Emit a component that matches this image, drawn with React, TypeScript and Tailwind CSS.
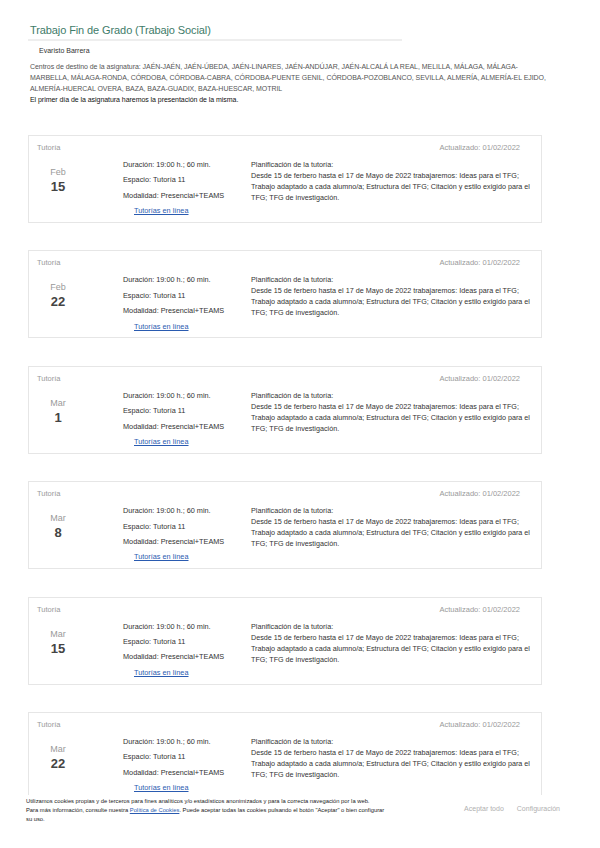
const tutorias = [
  { mes: "Feb", dia: "15" },
  { mes: "Feb", dia: "22" },
  { mes: "Mar", dia: "1" },
  { mes: "Mar", dia: "8" },
  { mes: "Mar", dia: "15" },
  { mes: "Mar", dia: "22" },
];

const TutoriaCard = ({ mes, dia }: { mes: string; dia: string }) => {
  return (
    <div className="h-[88px] border border-[#e6e6e6] bg-white pl-[8px] pr-[21px] pt-[6px] flex flex-col">
      <div className="flex justify-between text-[7.5px] leading-[11px] text-[#9a9a9a]">
        <span>Tutoría</span>
        <span>Actualizado: 01/02/2022</span>
      </div>
      <div className="flex mt-[4px]">
        <div className="w-[86px] shrink-0 flex flex-col items-center pr-[44px] pt-[9px]">
          <span className="text-[9px] leading-[12px] text-[#9a9a9a]">{mes}</span>
          <span className="text-[13px] leading-[18px] font-bold text-[#444]">{dia}</span>
        </div>
        <div className="w-[128px] shrink-0 text-[7.3px] leading-[15.4px] text-[#333] whitespace-nowrap">
          <div>Duración: 19:00 h.; 60 min.</div>
          <div>Espacio: Tutoría 11</div>
          <div>Modalidad: Presencial+TEAMS</div>
          <a href="#" className="block pl-[11px] text-[#2a5bb0] underline">
            Tutorías en línea
          </a>
        </div>
        <div className="flex-1 pt-[2px] text-[7.2px] leading-[11px] text-[#333] whitespace-nowrap">
          <div>Planificación de la tutoría:</div>
          <div>Desde 15 de ferbero hasta el 17 de Mayo de 2022 trabajaremos: Ideas para el TFG;</div>
          <div>Trabajo adaptado a cada alumno/a; Estructura del TFG; Citación y estilo exigido para el</div>
          <div>TFG; TFG de investigación.</div>
        </div>
      </div>
    </div>
  );
};

const App = () => {
  return (
    <div className="min-h-[848px] bg-white font-['Liberation_Sans',Arial,sans-serif] pl-[28px] pr-[58px] pt-[22px] pb-[80px]">
      <h1 className="w-[374px] border-b-2 border-[#eeeeee] pl-[2px] pb-[1px] text-[11px] leading-[16px] tracking-[-0.1px] text-[#3e7b69]">
        Trabajo Fin de Grado (Trabajo Social)
      </h1>
      <p className="pl-[11px] mt-[5px] text-[7px] leading-[10px] text-[#333]">Evaristo Barrera</p>
      <div className="pl-[2px] mt-[5px] text-[7px] leading-[11px] tracking-[-0.05px] whitespace-nowrap">
        <div className="text-[#555]">
          Centros de destino de la asignatura: JAÉN-JAÉN, JAÉN-ÚBEDA, JAÉN-LINARES, JAÉN-ANDÚJAR, JAÉN-ALCALÁ LA REAL, MELILLA, MÁLAGA, MÁLAGA-
          <br />
          MARBELLA, MÁLAGA-RONDA, CÓRDOBA, CÓRDOBA-CABRA, CÓRDOBA-PUENTE GENIL, CÓRDOBA-POZOBLANCO, SEVILLA, ALMERÍA, ALMERÍA-EL EJIDO,
          <br />
          ALMERÍA-HUERCAL OVERA, BAZA, BAZA-GUADIX, BAZA-HUESCAR, MOTRIL
        </div>
        <div className="text-[#111]">El primer día de la asignatura haremos la presentación de la misma.</div>
      </div>
      <div className="mt-[30px] flex flex-col gap-[27.4px]">
        {tutorias.map((t) => (
          <TutoriaCard key={t.mes + t.dia} mes={t.mes} dia={t.dia} />
        ))}
      </div>
      <div className="fixed bottom-0 left-0 right-0 h-[53px] bg-white flex items-start pt-[2px] pl-[26px] pr-[40px]">
        <div className="text-[5.8px] leading-[9px] text-[#222] whitespace-nowrap">
          Utilizamos cookies propias y de terceros para fines analíticos y/o estadísticos anonimizados y para la correcta navegación por la web.
          <br />
          Para más información, consulte nuestra{" "}
          <a href="#" className="text-[#2a5bb0] underline">
            Política de Cookies
          </a>
          . Puede aceptar todas las cookies pulsando el botón "Aceptar" o bien configurar
          <br />
          su uso.
        </div>
        <div className="ml-auto mt-[7px] flex gap-[13px] text-[7px] text-[#b0b0b0]">
          <span>Aceptar todo</span>
          <span>Configuración</span>
        </div>
      </div>
    </div>
  );
};

export default App;
